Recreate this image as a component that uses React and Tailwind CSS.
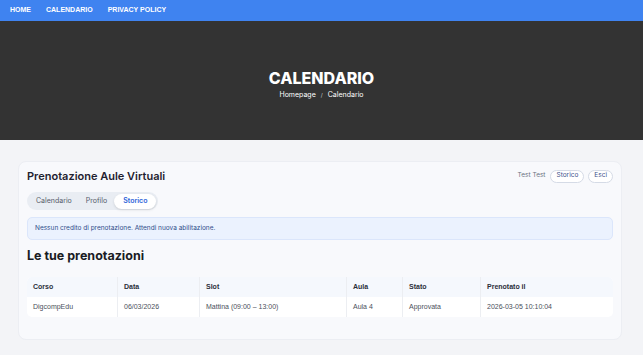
export default function App() {
  const inter = { fontFamily: 'Inter, "Liberation Sans", sans-serif' };
  const arial = { fontFamily: '"Liberation Sans", Arial, sans-serif' };
  const cols = [
    { h: "Corso", v: "DigcompEdu", w: "w-[91px]" },
    { h: "Data", v: "06/03/2026", w: "w-[82px]" },
    { h: "Slot", v: "Mattina (09:00 – 13:00)", w: "w-[147px]" },
    { h: "Aula", v: "Aula 4", w: "w-[56px]" },
    { h: "Stato", v: "Approvata", w: "w-[78px]" },
    { h: "Prenotato il", v: "2026-03-05 10:10:04", w: "flex-1" },
  ];
  return (
    <div className="w-[643px] h-[355px] bg-[#f3f4f7] overflow-hidden" style={arial}>
      <nav className="h-[21px] bg-[#3f83f0] flex items-center pl-[10px] gap-[15px] text-white font-bold text-[7px] uppercase">
        <span>Home</span>
        <span>Calendario</span>
        <span>Privacy Policy</span>
      </nav>
      <header className="h-[119px] bg-[#333333] flex flex-col items-center pt-[48px]" style={inter}>
        <h1 className="text-white font-extrabold text-[16px] leading-[19px]">CALENDARIO</h1>
        <div className="mt-[2px] flex items-center gap-[5px] text-white text-[7px]">
          <span>Homepage</span>
          <span className="text-[5.5px] text-gray-300">/</span>
          <span>Calendario</span>
        </div>
      </header>
      <main className="px-[18px] pt-[21px]">
        <section className="w-[604px] h-[179px] bg-[#f8f9fc] rounded-[8px] border border-[#eceef3] px-[8px] pt-[7px]">
          <div className="flex items-center justify-between h-[14px]">
            <h2 className="text-[11px] font-semibold text-[#1f2230]" style={inter}>Prenotazione Aule Virtuali</h2>
            <div className="flex items-center gap-[4px] text-[6.5px]" style={inter}>
              <span className="text-gray-500 mr-[1px]">Test Test</span>
              <span className="h-[13px] px-[5px] rounded-full border border-[#d5dbe6] bg-white text-[#3c4f8a] flex items-center">Storico</span>
              <span className="h-[13px] px-[5px] rounded-full border border-[#d5dbe6] bg-white text-[#3c4f8a] flex items-center">Esci</span>
            </div>
          </div>
          <div className="mt-[9px] inline-flex items-center h-[18px] rounded-full bg-[#e9edf3] px-[2px] text-[7px]" style={inter}>
            <span className="px-[7px] text-[#555c6a]">Calendario</span>
            <span className="px-[7px] text-[#555c6a]">Profilo</span>
            <span className="px-[9px] h-[15px] flex items-center rounded-full bg-white text-[#2d63d9] font-semibold shadow-sm">Storico</span>
          </div>
          <div className="mt-[7px] h-[23px] rounded-[5px] bg-[#ebf2fe] border border-[#dbe6fb] flex items-center px-[7px] text-[6.5px] text-[#2f4d8a]" style={inter}>
            Nessun credito di prenotazione. Attendi nuova abilitazione.
          </div>
          <h3 className="mt-[7px] text-[12.5px] font-bold text-[#1a1c24] leading-[18px]" style={inter}>Le tue prenotazioni</h3>
          <div className="mt-[12px] rounded-[5px] overflow-hidden bg-white flex text-[7px]">
            {cols.map((c, i) => (
              <div key={c.h} className={`${c.w} ${i < cols.length - 1 ? "border-r border-[#eceef2]" : ""} flex flex-col`}>
                <div className="h-[20px] bg-[#f5f8fd] flex items-center pl-[6px] font-bold text-[#2b2f3a]">{c.h}</div>
                <div className="h-[20px] flex items-center pl-[6px] text-[#4a4f5a]">{c.v}</div>
              </div>
            ))}
          </div>
        </section>
      </main>
    </div>
  );
}
